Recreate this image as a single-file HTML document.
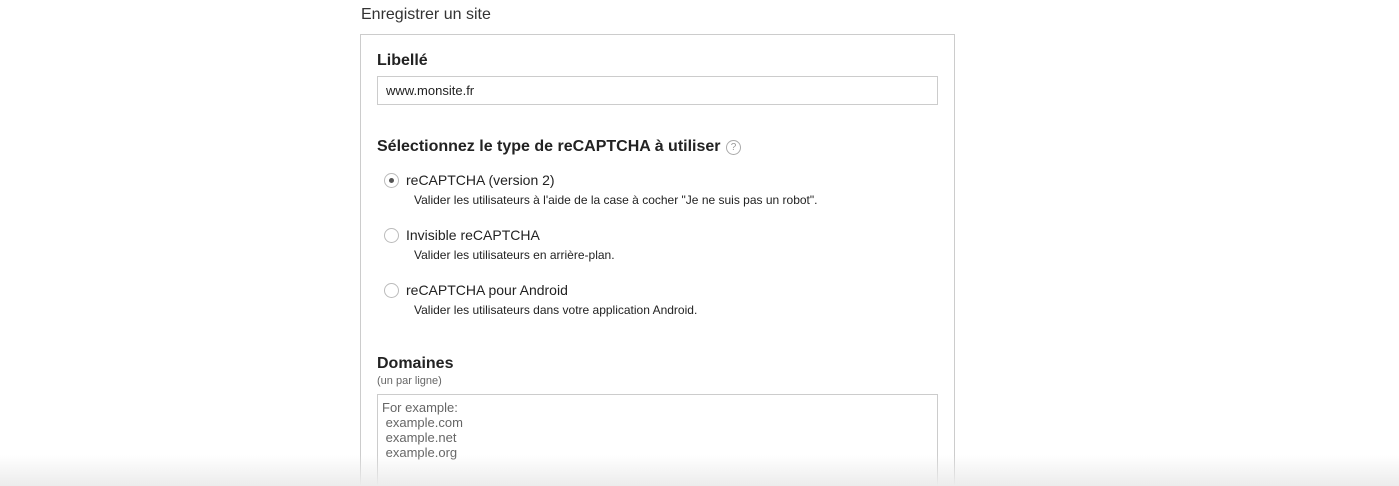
<!DOCTYPE html>
<html><head><meta charset="utf-8"><style>
html,body{margin:0;padding:0;width:1399px;height:486px;overflow:hidden;background:#fff;font-family:"Liberation Sans",Arial,sans-serif;color:#222;position:relative}
.a{position:absolute;white-space:nowrap}
.h{font-weight:bold;font-size:16px;color:#222}
.r{width:13px;height:13px;border:1px solid #bbb;border-radius:50%;position:absolute;background:#fff}
.opt{font-size:14px;color:#222}
.d{font-size:12px;color:#222}
.fade{position:absolute;left:0;right:0;top:455px;height:31px;background:linear-gradient(#fff0,#ececec)}
</style></head><body>
<div class="a" style="left:361px;top:6px;font-size:16px;color:#333">Enregistrer un site</div>
<div class="a" style="left:360px;top:34px;width:593px;height:470px;border:1px solid #ccc"></div>
<div class="a h" style="left:377px;top:52px">Libellé</div>
<div class="a" style="left:377px;top:76px;width:559px;height:27px;border:1px solid #ccc"></div>
<div class="a" style="left:386px;top:83px;font-size:13px">www.monsite.fr</div>
<div class="a h" style="left:377px;top:138px">Sélectionnez le type de reCAPTCHA à utiliser</div>
<div class="a" style="left:726px;top:140px;width:13px;height:13px;border:1px solid #aaa;border-radius:50%;font-size:10px;color:#999;text-align:center;line-height:13px">?</div>
<div class="r" style="left:384px;top:173px"><div style="position:absolute;left:4px;top:4px;width:5px;height:5px;border-radius:50%;background:#555"></div></div>
<div class="a opt" style="left:406px;top:172px">reCAPTCHA (version 2)</div>
<div class="a d" style="left:414px;top:193px">Valider les utilisateurs à l'aide de la case à cocher "Je ne suis pas un robot".</div>
<div class="r" style="left:384px;top:228px"></div>
<div class="a opt" style="left:406px;top:227px">Invisible reCAPTCHA</div>
<div class="a d" style="left:414px;top:248px">Valider les utilisateurs en arrière-plan.</div>
<div class="r" style="left:384px;top:283px"></div>
<div class="a opt" style="left:406px;top:282px">reCAPTCHA pour Android</div>
<div class="a d" style="left:414px;top:303px">Valider les utilisateurs dans votre application Android.</div>
<div class="a h" style="left:377px;top:355px">Domaines</div>
<div class="a" style="left:377px;top:375px;font-size:11px;color:#666">(un par ligne)</div>
<div class="a" style="left:377px;top:394px;width:559px;height:100px;border:1px solid #ccc"></div>
<div class="a" style="left:382px;top:400px;font-size:13px;color:#666;line-height:15px;white-space:pre">For example:
 example.com
 example.net
 example.org</div>
<div class="fade"></div>
</body></html>
